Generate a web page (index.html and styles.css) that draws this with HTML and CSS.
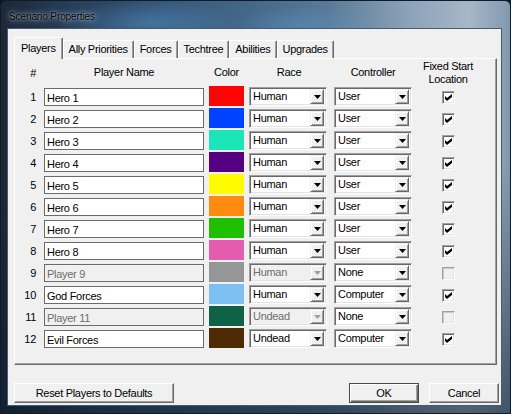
FILE: index.html
```html
<!DOCTYPE html>
<html lang="en">

<head>
    <meta charset="UTF-8">
    <title>Scenario Properties</title>
    <link rel="stylesheet" href="styles.css">
</head>

<body>
    <div class="window">
        <div class="titlebar">
            <span class="title">Scenario Properties</span>
        </div>
        <div class="client">
            <div class="tabs">
                <div class="tab active">Players</div>
                <div class="tab">Ally Priorities</div>
                <div class="tab">Forces</div>
                <div class="tab">Techtree</div>
                <div class="tab">Abilities</div>
                <div class="tab">Upgrades</div>
            </div>
            <div class="page">
                <div class="row head">
                    <div class="num">#</div>
                    <div>Player Name</div>
                    <div>Color</div>
                    <div>Race</div>
                    <div>Controller</div>
                    <div>Fixed Start<br>Location</div>
                </div>
                <div id="players"></div>
            </div>
            <div class="buttons">
                <button class="btn reset">Reset Players to Defaults</button>
                <button class="btn ok default">OK</button>
                <button class="btn">Cancel</button>
            </div>
        </div>
    </div>

    <script>
        // name, color, race, controller, fixed start, enabled
        const players = [
            ['Hero 1', '#ff0303', 'Human', 'User', true, true],
            ['Hero 2', '#0042ff', 'Human', 'User', true, true],
            ['Hero 3', '#1ce6b9', 'Human', 'User', true, true],
            ['Hero 4', '#540081', 'Human', 'User', true, true],
            ['Hero 5', '#fffc01', 'Human', 'User', true, true],
            ['Hero 6', '#fe8a0e', 'Human', 'User', true, true],
            ['Hero 7', '#20c000', 'Human', 'User', true, true],
            ['Hero 8', '#e55bb0', 'Human', 'User', true, true],
            ['Player 9', '#959697', 'Human', 'None', false, false],
            ['God Forces', '#7ebff1', 'Human', 'Computer', true, true],
            ['Player 11', '#106246', 'Undead', 'None', false, false],
            ['Evil Forces', '#4e2a04', 'Undead', 'Computer', true, true]
        ];

        const list = document.getElementById('players');

        const arrow = '<svg width="7" height="4" viewBox="0 0 7 4"><path d="M0 0h7L3.5 4z" fill="currentColor"/></svg>';
        const check = '<svg width="7" height="7" viewBox="0 0 7 7"><path d="M0 2l2 2 5-4v3L2 7 0 5z" fill="#000"/></svg>';

        function combo(value, disabled) {
            return `<div class="combo${disabled ? ' disabled' : ''}">
                <span class="combo-text">${value}</span>
                <span class="drop">${arrow}</span>
            </div>`;
        }

        players.forEach(([name, color, race, ctrl, fixed, enabled], i) => {
            const row = document.createElement('div');
            row.className = 'row';
            row.innerHTML = `
                <div class="num">${i + 1}</div>
                <input class="name" type="text" value="${name}" ${enabled ? '' : 'disabled'}>
                <div class="swatch" style="background:${color}"></div>
                ${combo(race, !enabled)}
                ${combo(ctrl, false)}
                <div class="check-cell">
                    <span class="check${enabled ? '' : ' disabled'}">${fixed ? check : ''}</span>
                </div>`;
            list.appendChild(row);
        });
    </script>
</body>

</html>
```

FILE: styles.css
```css
body {
    margin: 0;
    background-color: #0e1620;
    font-family: "Liberation Sans", Arial, sans-serif;
    font-size: 11px;
    letter-spacing: -0.3px;
    color: #000;
}

/* Aero style glass frame */
.window {
    width: 511px;
    height: 414px;
    box-sizing: border-box;
    display: flex;
    flex-direction: column;
    border: 1px solid #111b26;
    border-radius: 6px 6px 0 0;
    background:
        radial-gradient(ellipse 90px 22px at 150px 22px, rgba(80, 140, 190, 0.55), transparent),
        radial-gradient(ellipse 70px 18px at 300px 24px, rgba(90, 150, 200, 0.45), transparent),
        linear-gradient(to bottom, transparent 0, transparent 40%, rgba(10, 25, 45, 0.55) 100%),
        linear-gradient(to right, #1b2838 0%, #273f5a 14%, #37597b 34%, #46698a 50%, #587a98 64%, #8ba2b8 80%, #a6b7c8 92%, #8199af 100%);
}

.titlebar {
    height: 28px;
    flex-shrink: 0;
}

.title {
    display: inline-block;
    margin: 10px 0 0 8px;
    font-size: 10px;
    letter-spacing: -0.1px;
    line-height: 12px;
    text-shadow: 0 0 6px rgba(225, 235, 245, 0.8), 0 0 2px rgba(225, 235, 245, 0.6);
}

.client {
    flex: 1;
    margin: 0 9px 8px 7px;
    padding: 8px 4px 0 6px;
    background-color: #f0f0f0;
    box-shadow: 0 0 0 1px #4a5a6b;
}

/* Tab strip */
.tabs {
    display: flex;
    align-items: flex-end;
    height: 21px;
}

.tab {
    height: 17px;
    line-height: 16px;
    padding: 0 5px;
    border-top: 1px solid #fff;
    border-left: 1px solid #fff;
    border-right: 1px solid #696969;
    border-radius: 2px 2px 0 0;
    box-shadow: inset -1px 0 #a0a0a0;
    background-color: #f0f0f0;
}

.tab.active {
    position: relative;
    z-index: 1;
    height: 21px;
    line-height: 20px;
    padding: 0 6px;
    margin-bottom: -1px;
}

.page {
    height: 307px;
    box-sizing: border-box;
    border: 1px solid;
    border-color: #fff #696969 #696969 #fff;
    box-shadow: inset -1px -1px #a0a0a0;
}

/* Player table */
.row {
    display: grid;
    grid-template-columns: 24px 160px 35px 80px 78px 62px;
    column-gap: 5px;
    height: 22px;
    align-items: start;
}

.row.head {
    height: 27px;
    align-items: center;
    text-align: center;
    line-height: 13px;
}

.num {
    text-align: right;
    padding-right: 3px;
    margin-top: 2px;
    line-height: 18px;
}

.row.head .num {
    margin-top: 0;
}

.name {
    margin: 2px 0 0;
    width: 160px;
    height: 18px;
    box-sizing: border-box;
    padding: 1px 2px 0;
    border: 1px solid #6b6b6b;
    background-color: #fff;
    font: inherit;
    letter-spacing: inherit;
    color: #000;
    outline: none;
}

.name:disabled {
    background-color: #f0f0f0;
    color: #6d6d6d;
}

.swatch {
    height: 20px;
}

.combo {
    width: 78px;
    height: 19px;
    margin-top: 1px;
    box-sizing: border-box;
    display: flex;
    align-items: center;
    border: 1px solid;
    border-color: #a0a0a0 #fff #fff #a0a0a0;
    box-shadow: inset 1px 1px #696969, inset -1px -1px #e3e3e3;
    background-color: #fff;
    padding: 1px 2px 1px 1px;
}

.combo-text {
    flex: 1;
    padding-left: 2px;
    line-height: 15px;
}

.drop {
    width: 14px;
    height: 15px;
    box-sizing: border-box;
    display: flex;
    align-items: center;
    justify-content: center;
    border: 1px solid;
    border-color: #f0f0f0 #696969 #696969 #f0f0f0;
    box-shadow: inset 1px 1px #fff, inset -1px -1px #a0a0a0;
    background-color: #f0f0f0;
    color: #000;
}

.combo.disabled {
    background-color: #f0f0f0;
    color: #6d6d6d;
}

.combo.disabled .drop {
    color: #a0a0a0;
}

.check-cell {
    display: flex;
    justify-content: center;
    margin-top: 5px;
}

.check {
    width: 13px;
    height: 13px;
    box-sizing: border-box;
    display: flex;
    align-items: center;
    justify-content: center;
    border: 1px solid;
    border-color: #a0a0a0 #fff #fff #a0a0a0;
    box-shadow: inset 1px 1px #696969, inset -1px -1px #e3e3e3;
    background-color: #fff;
}

.check.disabled {
    background-color: #f0f0f0;
    box-shadow: inset 1px 1px #c8c8c8, inset -1px -1px #e3e3e3;
}

/* Dialog buttons */
.buttons {
    display: flex;
    gap: 10px;
    margin: 18px -2px 0 0;
}

.btn {
    height: 20px;
    padding: 0;
    border: 1px solid;
    border-color: #fff #696969 #696969 #fff;
    box-shadow: inset -1px -1px #a0a0a0;
    background-color: #f0f0f0;
    font: inherit;
    letter-spacing: inherit;
    color: #000;
}

.reset {
    width: 160px;
}

.ok {
    margin-left: auto;
}

.ok,
.btn:last-child {
    width: 70px;
}

.btn.default {
    border-color: #4a4a4a;
    box-shadow: inset 1px 1px #fff, inset -1px -1px #696969, inset -2px -2px #a0a0a0;
}
```
